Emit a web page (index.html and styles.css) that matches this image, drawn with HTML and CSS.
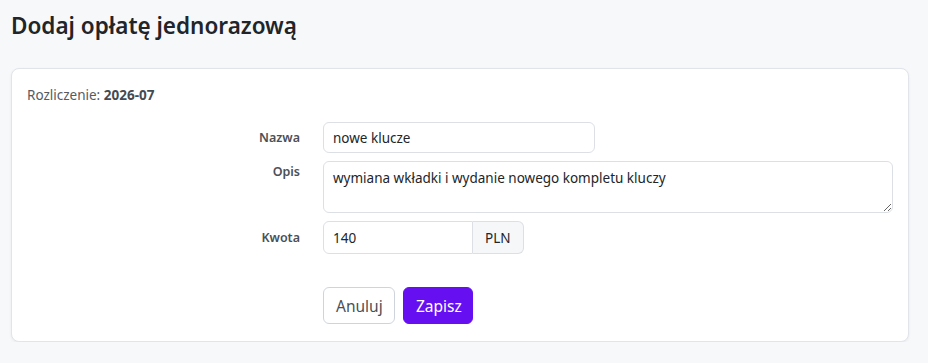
FILE: index.html
```html
<!DOCTYPE html>
<html lang="pl">
<head>
    <meta charset="UTF-8">
    <meta name="viewport" content="width=device-width, initial-scale=1.0">
    <title>Dodaj opłatę jednorazową</title>
    <link rel="stylesheet" href="styles.css">
</head>
<body>
    <div class="page">
        <h1 class="title">Dodaj opłatę jednorazową</h1>

        <div class="card">
            <p class="period">Rozliczenie: <strong>2026-07</strong></p>

            <form class="form">
                <label class="label" for="nazwa">Nazwa</label>
                <div class="field">
                    <input class="input input-short" type="text" id="nazwa" value="nowe klucze">
                </div>

                <label class="label label-top" for="opis">Opis</label>
                <div class="field">
                    <textarea class="input textarea" id="opis">wymiana wkładki i wydanie nowego kompletu kluczy</textarea>
                </div>

                <label class="label" for="kwota">Kwota</label>
                <div class="field">
                    <div class="group">
                        <input class="input group-input" type="text" id="kwota" value="140">
                        <span class="addon">PLN</span>
                    </div>
                </div>

                <div></div>
                <div class="actions">
                    <button type="button" class="btn btn-light">Anuluj</button>
                    <button type="button" class="btn btn-primary">Zapisz</button>
                </div>
            </form>
        </div>
    </div>
</body>
</html>
```

FILE: styles.css
```css
* {
    box-sizing: border-box;
}
body {
    margin: 0;
    background: #f7f8fa;
    font-family: "Noto Sans", "Open Sans", sans-serif;
    color: #212529;
}
.page {
    padding: 9px 19px 0 11px;
}
.title {
    margin: 0 0 26px 0;
    font-size: 22.5px;
    font-weight: 600;
    line-height: 33px;
    color: #212529;
}
.card {
    background: #fff;
    border: 1px solid #e1e4ea;
    border-radius: 8px;
    box-shadow: 0 1px 3px rgba(0, 0, 0, 0.06);
    padding: 16px 15px 17px 15px;
}
.period {
    margin: 0 0 17px 0;
    font-size: 13.5px;
    line-height: 20px;
    color: #555b63;
}
.period strong {
    font-weight: 700;
    color: #444a52;
}

/* formularz */
.form {
    display: grid;
    grid-template-columns: 273px 1fr;
    column-gap: 23px;
    row-gap: 8px;
}
.label {
    align-self: center;
    text-align: right;
    font-size: 12.5px;
    font-weight: 600;
    color: #4a5058;
}
.label-top {
    align-self: start;
    padding-top: 2px;
}
.field {
    display: flex;
}
.input {
    font-family: inherit;
    font-size: 13.5px;
    color: #212529;
    background: #fff;
    border: 1px solid #dcdfe5;
    border-radius: 6px;
    padding: 0 9px;
    height: 31px;
    outline: none;
}
.input-short {
    width: 272px;
}
.textarea {
    width: 100%;
    height: 52px;
    padding: 6px 9px;
    line-height: 20px;
    resize: vertical;
}
.group {
    display: flex;
    height: 33px;
}
.group-input {
    width: 150px;
    height: 33px;
    border-radius: 6px 0 0 6px;
}
.addon {
    display: flex;
    align-items: center;
    padding: 0 12px 0 12px;
    font-size: 13.5px;
    color: #212529;
    background: #f6f7f9;
    border: 1px solid #dcdfe5;
    border-left: none;
    border-radius: 0 6px 6px 0;
}
.actions {
    display: flex;
    gap: 8px;
    margin-top: 25px;
}
.btn {
    font-family: inherit;
    font-size: 15.5px;
    height: 37px;
    padding: 0 12px;
    border-radius: 6px;
    cursor: pointer;
}
.btn-light {
    background: #fff;
    color: #4a5058;
    border: 1px solid #cfd4dc;
    width: 72px;
}
.btn-primary {
    background: #6610f2;
    color: #fff;
    border: 1px solid #6610f2;
    width: 70px;
}
```
